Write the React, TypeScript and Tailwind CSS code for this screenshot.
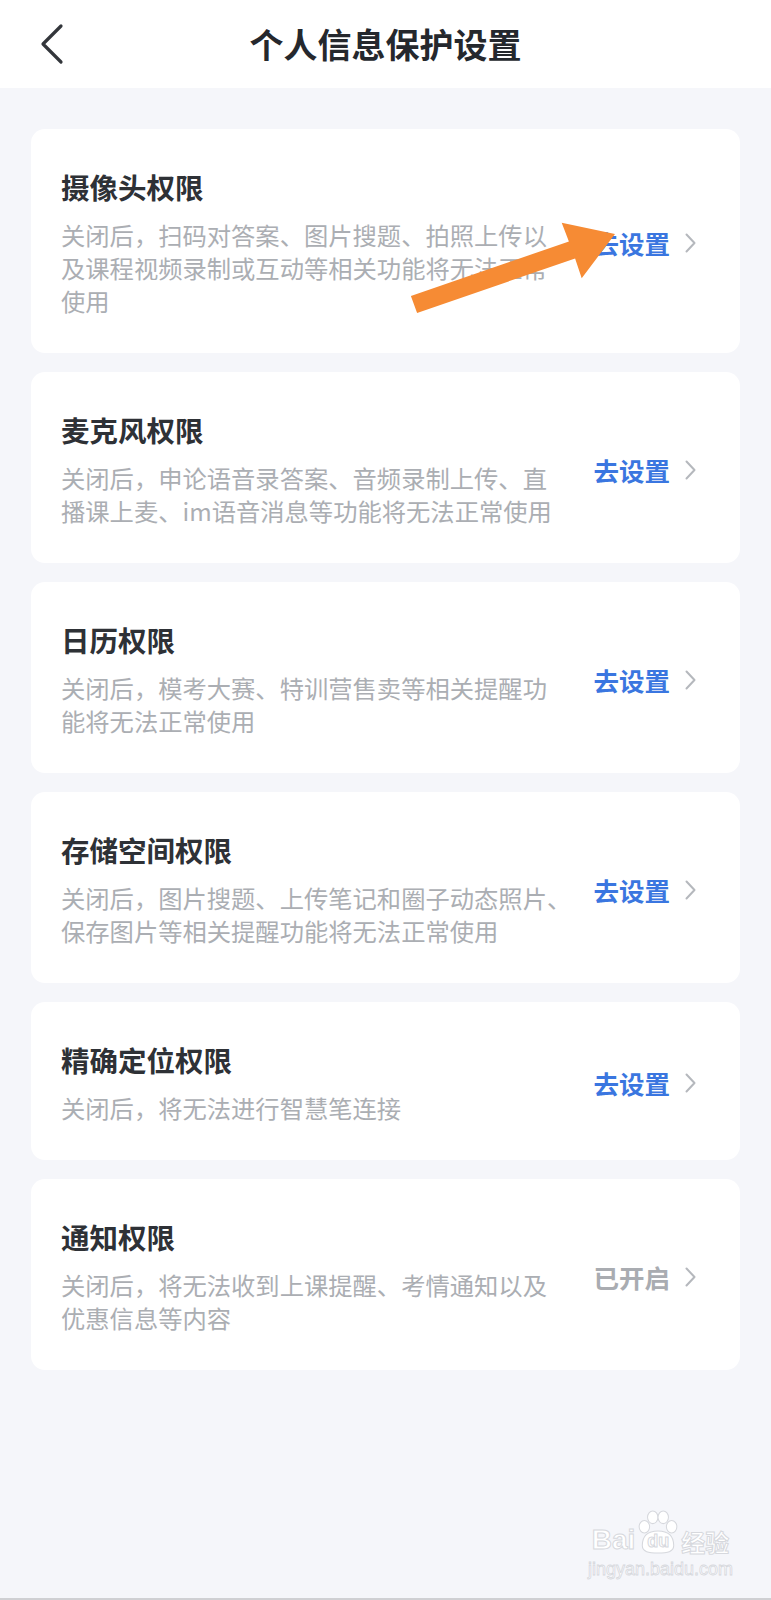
import React from 'react';

interface Permission {
  title: string;
  lines: string[];
  action: string;
  enabled?: boolean;
}

const permissions: Permission[] = [
  {
    title: '摄像头权限',
    lines: ['关闭后，扫码对答案、图片搜题、拍照上传以', '及课程视频录制或互动等相关功能将无法正常', '使用'],
    action: '去设置',
  },
  {
    title: '麦克风权限',
    lines: ['关闭后，申论语音录答案、音频录制上传、直', '播课上麦、im语音消息等功能将无法正常使用'],
    action: '去设置',
  },
  {
    title: '日历权限',
    lines: ['关闭后，模考大赛、特训营售卖等相关提醒功', '能将无法正常使用'],
    action: '去设置',
  },
  {
    title: '存储空间权限',
    lines: ['关闭后，图片搜题、上传笔记和圈子动态照片、', '保存图片等相关提醒功能将无法正常使用'],
    action: '去设置',
  },
  {
    title: '精确定位权限',
    lines: ['关闭后，将无法进行智慧笔连接'],
    action: '去设置',
  },
  {
    title: '通知权限',
    lines: ['关闭后，将无法收到上课提醒、考情通知以及', '优惠信息等内容'],
    action: '已开启',
    enabled: true,
  },
];

function Chevron({ className }: { className?: string }) {
  return (
    <svg width="11" height="20" viewBox="0 0 11 20" fill="none" className={className}>
      <path d="M1.5 1.5 L9.5 10 L1.5 18.5" stroke="currentColor" strokeWidth="2" strokeLinecap="round" strokeLinejoin="round" />
    </svg>
  );
}

function PermissionCard({ item }: { item: Permission }) {
  return (
    <div className="flex items-center rounded-[14px] bg-white pl-[30px] pr-[44px] pt-[40px] pb-[36px]">
      <div className="w-[500px] shrink-0">
        <div className="text-[28.5px] font-bold leading-[36px] text-[#2e3136]">{item.title}</div>
        <div className="mt-[13px] text-[24.3px] leading-[33px] text-[#abaeb3]">
          {item.lines.map((line, i) => (
            <div key={i} className="whitespace-nowrap">
              {line}
            </div>
          ))}
        </div>
      </div>
      <div className="ml-auto flex items-center gap-[15px]">
        <span
          className={`text-[25.5px] font-bold leading-none ${
            item.enabled ? 'text-[#a9acb1]' : 'text-[#3a76e0]'
          }`}
        >
          {item.action}
        </span>
        <Chevron className="text-[#b5b8bd]" />
      </div>
    </div>
  );
}

export default function App() {
  return (
    <div
      className="relative min-h-[1600px] bg-[#f5f6fa] border-b-2 border-[#cfd0d3]"
      style={{ fontFamily: '"Noto Sans CJK SC", "Noto Sans", sans-serif' }}
    >
      {/* 顶部导航 */}
      <div className="relative flex h-[88px] items-center justify-center bg-white">
        <svg
          width="24"
          height="42"
          viewBox="0 0 24 42"
          fill="none"
          className="absolute left-[40px] top-[23px] text-[#33363b]"
        >
          <path d="M21 3 L3 21 L21 39" stroke="currentColor" strokeWidth="3.2" strokeLinecap="round" strokeLinejoin="round" />
        </svg>
        <h1 className="text-[34px] font-bold leading-none text-[#25282d]">个人信息保护设置</h1>
      </div>

      {/* 权限列表 */}
      <div className="flex flex-col gap-[19px] pl-[31px] pr-[31px] pt-[41px]">
        {permissions.map((p) => (
          <PermissionCard key={p.title} item={p} />
        ))}
      </div>

      {/* 标注箭头 */}
      <svg className="pointer-events-none absolute left-0 top-0" width="771" height="400" viewBox="0 0 771 400">
        <polygon
          points="410.9,295.9 568.9,241.5 561.7,222.7 615,234 581.7,278.3 575.1,258.5 417.1,312.9"
          fill="#f68b34"
        />
      </svg>

      {/* 百度经验水印 */}
      <div className="pointer-events-none absolute left-[588px] top-[1510px] flex flex-col items-center">
        <div className="flex items-end">
          <span
            className="text-[28px] font-bold leading-none text-white [-webkit-text-stroke:1px_#d6d8dd]"
            style={{ fontFamily: '"Liberation Sans", sans-serif' }}
          >
            Bai
          </span>
          <span className="relative mx-[1px] flex h-[44px] w-[44px] items-end justify-center">
            <svg width="44" height="44" viewBox="0 0 42 42" className="absolute inset-0">
              <g fill="#ffffff" stroke="#d6d8dd" strokeWidth="1">
                <ellipse cx="8" cy="16" rx="5" ry="6" />
                <ellipse cx="16" cy="7" rx="5" ry="6" />
                <ellipse cx="26" cy="7" rx="5" ry="6" />
                <ellipse cx="34" cy="16" rx="5" ry="6" />
                <path d="M6 34 C6 22 14 20 21 20 C28 20 36 22 36 34 C36 40 30 41 21 41 C12 41 6 40 6 34 Z" />
              </g>
            </svg>
            <span
              className="relative mb-[4px] text-[18px] font-bold leading-none text-white [-webkit-text-stroke:1px_#d6d8dd]"
              style={{ fontFamily: '"Liberation Sans", sans-serif' }}
            >
              du
            </span>
          </span>
          <span className="text-[24px] font-bold leading-none text-white [-webkit-text-stroke:1px_#d6d8dd]">经验</span>
        </div>
        <div
          className="mt-[6px] text-[18px] leading-none text-white [-webkit-text-stroke:0.8px_#d6d8dd]"
          style={{ fontFamily: '"Liberation Sans", sans-serif' }}
        >
          jingyan.baidu.com
        </div>
      </div>
    </div>
  );
}
